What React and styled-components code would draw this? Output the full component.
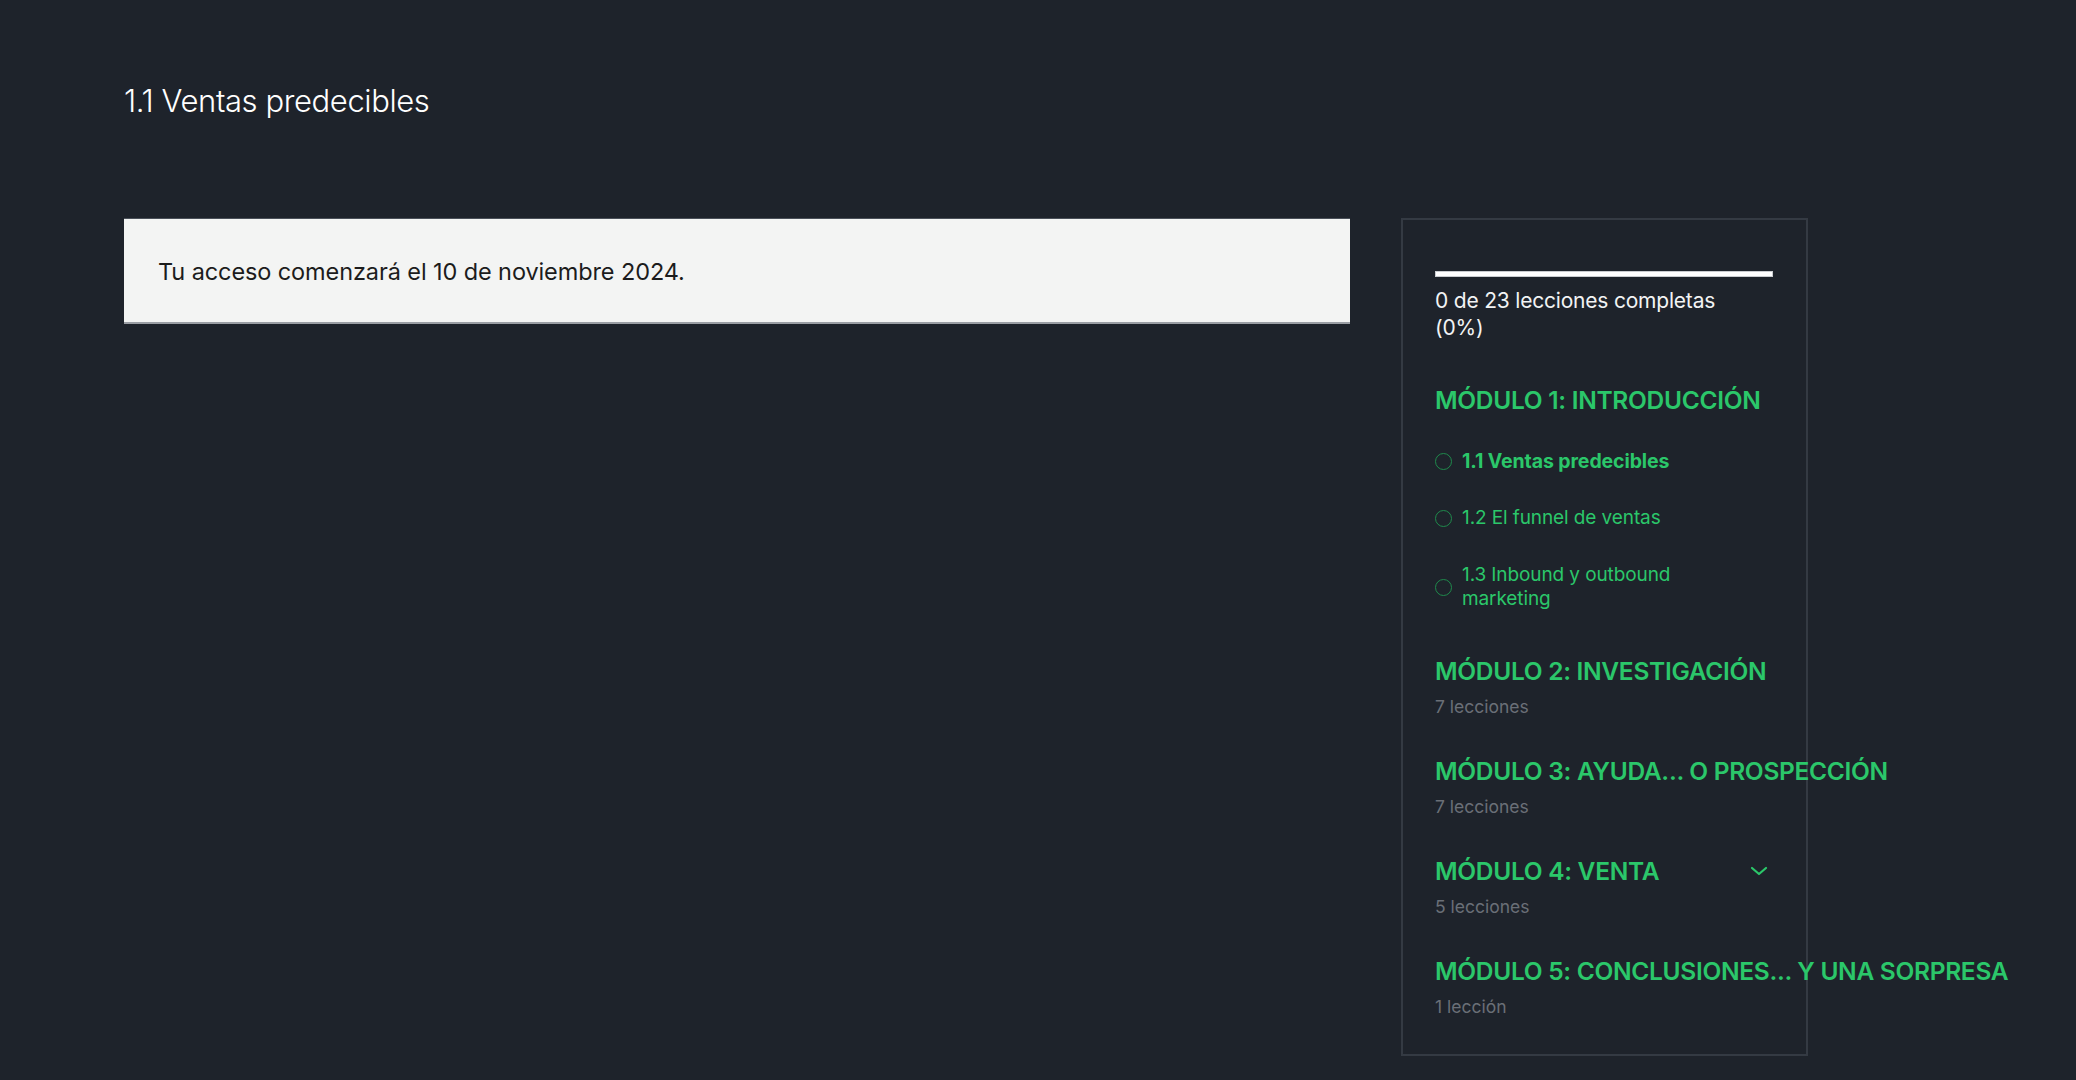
import styled, { createGlobalStyle } from "styled-components";

const GlobalStyle = createGlobalStyle`
  html, body {
    margin: 0;
    padding: 0;
    background: #1e232b;
  }
  body {
    font-family: Inter, "Noto Sans", "Liberation Sans", sans-serif;
    color: #f4f5f6;
    -webkit-font-smoothing: antialiased;
  }
`;

const Page = styled.div`
  min-height: 1080px;
  box-sizing: border-box;
  padding: 81px 0 0 124px;
`;
const Title = styled.h1`
  margin: 0;
  font-size: 31px;
  line-height: 40px;
  font-weight: 300;
  letter-spacing: -0.4px;
  color: #fff;
`;
const Columns = styled.div`
  display: flex;
  align-items: flex-start;
  gap: 51px;
  margin-top: 97px;
`;
const Main = styled.div`
  width: 1226px;
`;
const Notice = styled.div`
  height: 106px;
  box-sizing: border-box;
  display: flex;
  align-items: center;
  padding: 2px 34px 0;
  background: #f3f4f3;
  border-top: 1px solid #4a5059;
  border-bottom: 2px solid #9a9ea4;
  color: #1c1c1c;
  font-size: 23.5px;
  letter-spacing: -0.1px;
`;
const Sidebar = styled.aside`
  width: 407px;
  box-sizing: border-box;
  border: 2px solid #343a43;
  padding: 51px 33px 36px 32px;
`;
const Progress = styled.div`
  height: 6px;
  box-sizing: border-box;
  background: #fff;
  border: 1px solid #c9ccd0;
`;
const ProgressText = styled.p`
  margin: 10px 0 0;
  max-width: 320px;
  font-size: 21px;
  line-height: 27px;
  color: #f2f3f4;
  letter-spacing: -0.2px;
`;
const Modules = styled.div`
  display: flex;
  flex-direction: column;
  gap: 38px;
  margin-top: 44px;
`;
const Module = styled.div``;
const ModuleHead = styled.div`
  display: flex;
  align-items: center;
  height: 30px;
`;
const ModuleTitle = styled.h3`
  margin: 0;
  white-space: nowrap;
  font-size: 24.5px;
  line-height: 30px;
  font-weight: 600;
  letter-spacing: -0.3px;
  color: #2bc76a;
`;
const Chevron = styled.svg`
  margin-left: auto;
  margin-right: 2px;
  flex: none;
`;
const ModuleCount = styled.div`
  margin-top: 10px;
  font-size: 17.5px;
  line-height: 22px;
  color: #6a6f77;
`;
const Lessons = styled.ul`
  list-style: none;
  margin: 34px 0 0;
  padding: 0 0 7px;
  display: flex;
  flex-direction: column;
  gap: 33px;
`;
const Lesson = styled.li`
  display: flex;
  align-items: center;
  gap: 10px;
  padding-right: 36px;
  font-size: ${(p) => (p.$active ? "19.5px" : "19px")};
  line-height: 24px;
  color: #2bc76a;
  font-weight: ${(p) => (p.$active ? 700 : 400)};
  letter-spacing: -0.1px;
`;
const Dot = styled.span`
  flex: none;
  width: 17px;
  height: 17px;
  box-sizing: border-box;
  border-radius: 50%;
  border: 1.5px solid #1f8a4c;
`;

const modules = [
  { title: "MÓDULO 2: INVESTIGACIÓN", count: "7 lecciones" },
  { title: "MÓDULO 3: AYUDA... O PROSPECCIÓN", count: "7 lecciones" },
  { title: "MÓDULO 4: VENTA", count: "5 lecciones", open: true },
  { title: "MÓDULO 5: CONCLUSIONES... Y UNA SORPRESA", count: "1 lección" },
];

const lessons = [
  { name: "1.1 Ventas predecibles", active: true },
  { name: "1.2 El funnel de ventas" },
  { name: "1.3 Inbound y outbound marketing" },
];

export default function App() {
  return (
    <>
      <GlobalStyle />
      <Page>
        <Title>1.1 Ventas predecibles</Title>
        <Columns>
          <Main>
            <Notice>Tu acceso comenzará el 10 de noviembre 2024.</Notice>
          </Main>
          <Sidebar>
            <Progress />
            <ProgressText>0 de 23 lecciones completas (0%)</ProgressText>
            <Modules>
              <Module>
                <ModuleHead>
                  <ModuleTitle>MÓDULO 1: INTRODUCCIÓN</ModuleTitle>
                </ModuleHead>
                <Lessons>
                  {lessons.map((l) => (
                    <Lesson key={l.name} $active={l.active}>
                      <Dot />
                      <span>{l.name}</span>
                    </Lesson>
                  ))}
                </Lessons>
              </Module>
              {modules.map((m) => (
                <Module key={m.title}>
                  <ModuleHead>
                    <ModuleTitle>{m.title}</ModuleTitle>
                    {m.open && (
                      <Chevron width="24" height="24" viewBox="0 0 24 24" fill="none">
                        <path
                          d="M5 9l7 6 7-6"
                          stroke="#2bc76a"
                          strokeWidth="2.2"
                          strokeLinecap="round"
                          strokeLinejoin="round"
                        />
                      </Chevron>
                    )}
                  </ModuleHead>
                  <ModuleCount>{m.count}</ModuleCount>
                </Module>
              ))}
            </Modules>
          </Sidebar>
        </Columns>
      </Page>
    </>
  );
}
